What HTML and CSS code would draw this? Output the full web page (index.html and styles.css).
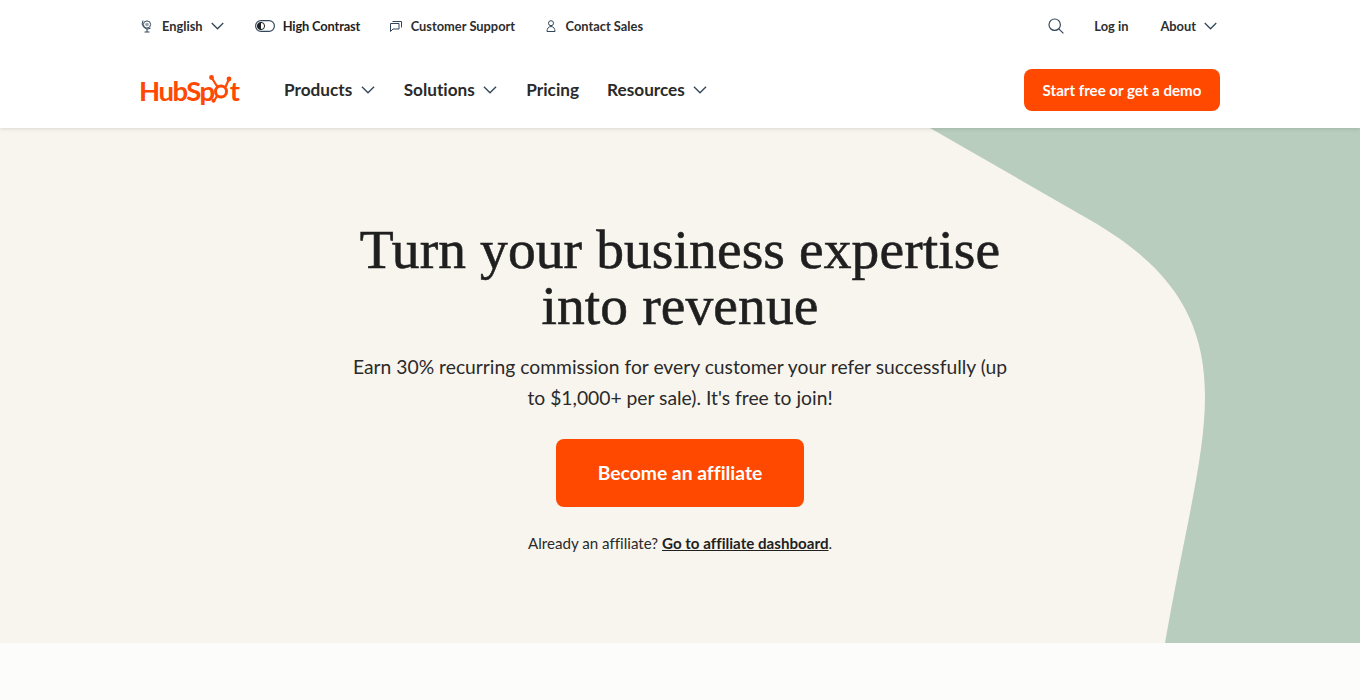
FILE: index.html
```html
<!DOCTYPE html>
<html lang="en">
<head>
    <meta charset="UTF-8">
    <title>HubSpot Affiliate Program</title>
    <link rel="stylesheet" href="styles.css">
</head>
<body>
    <header class="site-header">
        <div class="utility-bar">
            <ul class="utility-list">
                <li class="utility-item">
                    <svg class="icon-sm" viewBox="0 0 14 14" fill="none" stroke="#33475b" stroke-width="1"><circle cx="7" cy="5.5" r="3.6"/><circle cx="7" cy="5.5" r="1.8" fill="#99a3ad" stroke="none"/><path d="M3 1.5a5.6 5.6 0 0 0 7.5 7.8M7 10v3M4.5 13h5"/></svg>
                    <span>English</span>
                    <svg class="chevron chevron-top" viewBox="0 0 12 7"><path d="M.7.7 6 6l5.3-5.3"/></svg>
                </li>
                <li class="utility-item strong">
                    <svg class="toggle" viewBox="0 0 20 12" fill="none"><rect x=".6" y=".6" width="18.8" height="10.8" rx="5.4" stroke="#33475b" stroke-width="1.2"/><circle cx="6" cy="6" r="3.6" stroke="#1f1f1f" stroke-width="1"/><path d="M6 2.4a3.6 3.6 0 0 0 0 7.2z" fill="#1f1f1f"/></svg>
                    <span>High Contrast</span>
                </li>
                <li class="utility-item">
                    <svg class="icon-sm" viewBox="0 0 14 14" fill="none" stroke="#33475b" stroke-width="1"><path d="M1.500 4.500h8.500v5.500H4L1.500 12.500z"/><path d="M3.500 2.500h9v6"/></svg>
                    <span>Customer Support</span>
                </li>
                <li class="utility-item">
                    <svg class="icon-sm" viewBox="0 0 14 14" fill="none" stroke="#33475b" stroke-width="1"><circle cx="7" cy="4.200" r="2.500"/><path d="M3 12.500c0-3 1.500-5 4-5s4 2 4 5z"/></svg>
                    <span>Contact Sales</span>
                </li>
            </ul>
            <ul class="utility-list utility-right">
                <li class="utility-item search-item">
                    <svg class="icon-search" viewBox="0 0 16 16" fill="none" stroke="#33475b" stroke-width="1.200"><circle cx="6.700" cy="6.700" r="5.700"/><path d="m10.800 10.800 4.600 4.600"/></svg>
                </li>
                <li class="utility-item">Log in</li>
                <li class="utility-item">
                    <span>About</span>
                    <svg class="chevron chevron-top" viewBox="0 0 12 7"><path d="M.7.7 6 6l5.300-5.300"/></svg>
                </li>
            </ul>
        </div>
        <div class="main-bar">
            <a class="logo">
                <span>HubSp</span><svg class="logo-sprocket" viewBox="0 0 24 28" fill="none" stroke="#ff4800"><circle cx="12" cy="16.500" r="5.500" stroke-width="3"/><path d="M2.500 2.500 8.500 12M20 4l-3.500 8M8 21l-3 5" stroke-width="2.200"/><circle cx="2.500" cy="2.500" r="2.400" fill="#ff4800" stroke="none"/><circle cx="20" cy="4" r="2.400" fill="#ff4800" stroke="none"/><circle cx="4.500" cy="25.800" r="2" fill="#ff4800" stroke="none"/></svg><span>t</span>
            </a>
            <nav class="main-nav">
                <a class="nav-link">Products <svg class="chevron" viewBox="0 0 12 7"><path d="M.7.7 6 6l5.300-5.300"/></svg></a>
                <a class="nav-link">Solutions <svg class="chevron" viewBox="0 0 12 7"><path d="M.7.7 6 6l5.300-5.300"/></svg></a>
                <a class="nav-link">Pricing</a>
                <a class="nav-link">Resources <svg class="chevron" viewBox="0 0 12 7"><path d="M.7.7 6 6l5.300-5.300"/></svg></a>
            </nav>
            <a class="btn btn-small">Start free or get a demo</a>
        </div>
    </header>

    <section class="hero">
        <svg class="hero-shape" viewBox="0 0 1360 515" preserveAspectRatio="none">
            <path d="M930 0 L1090 92 C1170 138 1205 190 1205 268 C1205 330 1185 400 1165 515 L1360 515 L1360 0 Z" fill="#b9cdbe"/>
        </svg>
        <div class="hero-content">
            <h1>Turn your business expertise<br>into revenue</h1>
            <p class="hero-text">Earn 30% recurring commission for every customer your refer successfully (up to $1,000+ per sale). It's free to join!</p>
            <a class="btn btn-large">Become an affiliate</a>
            <p class="hero-note">Already an affiliate? <a class="dash-link">Go to affiliate dashboard</a>.</p>
        </div>
    </section>
    <div class="below"></div>
</body>
</html>
```

FILE: styles.css
```css
* { box-sizing: border-box; }

body {
    margin: 0;
    background: #fcfcfa;
    color: #1f1f1f;
    font-family: "Lato", sans-serif;
    font-variant-ligatures: none;
    overflow: hidden;
}

ul { list-style: none; margin: 0; padding: 0; }

.site-header {
    position: relative;
    z-index: 2;
    height: 128px;
    background: #fff;
    box-shadow: 0 1px 4px rgba(0, 0, 0, 0.12);
    padding: 0 140px;
}

.utility-bar {
    display: flex;
    justify-content: space-between;
    align-items: center;
    height: 51px;
}

.utility-list { display: flex; align-items: center; gap: 28.500px; }
.utility-right { gap: 32px; }

.utility-item {
    display: flex;
    align-items: center;
    gap: 8px;
    font-size: 12.850px;
    font-weight: 700;
    color: #2e2e2e;
}
.utility-item.strong { color: #1f1f1f; letter-spacing: -0.150px; }
.search-item { margin-right: -2px; }

.icon-sm { width: 14px; height: 14px; }
.toggle { width: 20px; height: 12px; margin-left: 2.500px; }
.icon-search { width: 16px; height: 16px; }

.chevron {
    width: 14px;
    height: 8px;
    margin: 0 1px 0 5.500px;
    fill: none;
    stroke: #33475b;
    stroke-width: 1.2;
}
.chevron-top { width: 13px; margin: 0 3px 0 0; }
.utility-list:first-child .chevron-top { margin-right: 0; }

.main-bar {
    display: flex;
    align-items: center;
    height: 78px;
}

.logo {
    display: flex;
    align-items: center;
    width: 145px;
    margin-left: -1px;
    color: #ff4800;
    font-size: 27.500px;
    font-weight: 700;
    letter-spacing: -1.500px;
}
.logo-sprocket { width: 24px; height: 28px; margin: -3px -3px 0 -5px; }

.main-nav { display: flex; align-items: center; gap: 28px; flex: 1; }

.nav-link {
    display: flex;
    align-items: center;
    gap: 3px;
    padding-bottom: 1px;
    font-size: 17.200px;
    font-weight: 700;
    color: #2a2a2a;
}

.btn {
    display: flex;
    align-items: center;
    justify-content: center;
    background: #ff4800;
    color: #fff;
    font-weight: 700;
    border-radius: 8px;
}
.btn-small { width: 196px; height: 42px; padding-bottom: 1px; font-size: 15.100px; }
.btn-large { width: 248px; height: 68px; padding-bottom: 2px; font-size: 19.300px; }

.hero {
    position: relative;
    height: 515px;
    background: #f8f5ee;
}

.hero-shape {
    position: absolute;
    top: 0;
    left: 0;
    width: 100%;
    height: 100%;
}

.hero-content {
    position: relative;
    display: flex;
    flex-direction: column;
    align-items: center;
    text-align: center;
    padding-top: 94px;
}

h1 {
    margin: 0;
    font-family: "Liberation Serif", serif;
    font-size: 55.500px;
    font-weight: 400;
    letter-spacing: 0.100px;
    line-height: 56px;
    color: #1f1f1f;
    -webkit-text-stroke: 0.6px #1f1f1f;
}

.hero-text {
    width: 660px;
    margin: 17px 0 26px;
    font-size: 19.300px;
    line-height: 31px;
    color: #2a2a2a;
}

.hero-note {
    margin: 26px 0 0;
    font-size: 15.150px;
    line-height: 20px;
    color: #2a2a2a;
}

.dash-link {
    font-weight: 700;
    text-decoration: underline;
    color: #1f1f1f;
}

.below { height: 57px; }
```
